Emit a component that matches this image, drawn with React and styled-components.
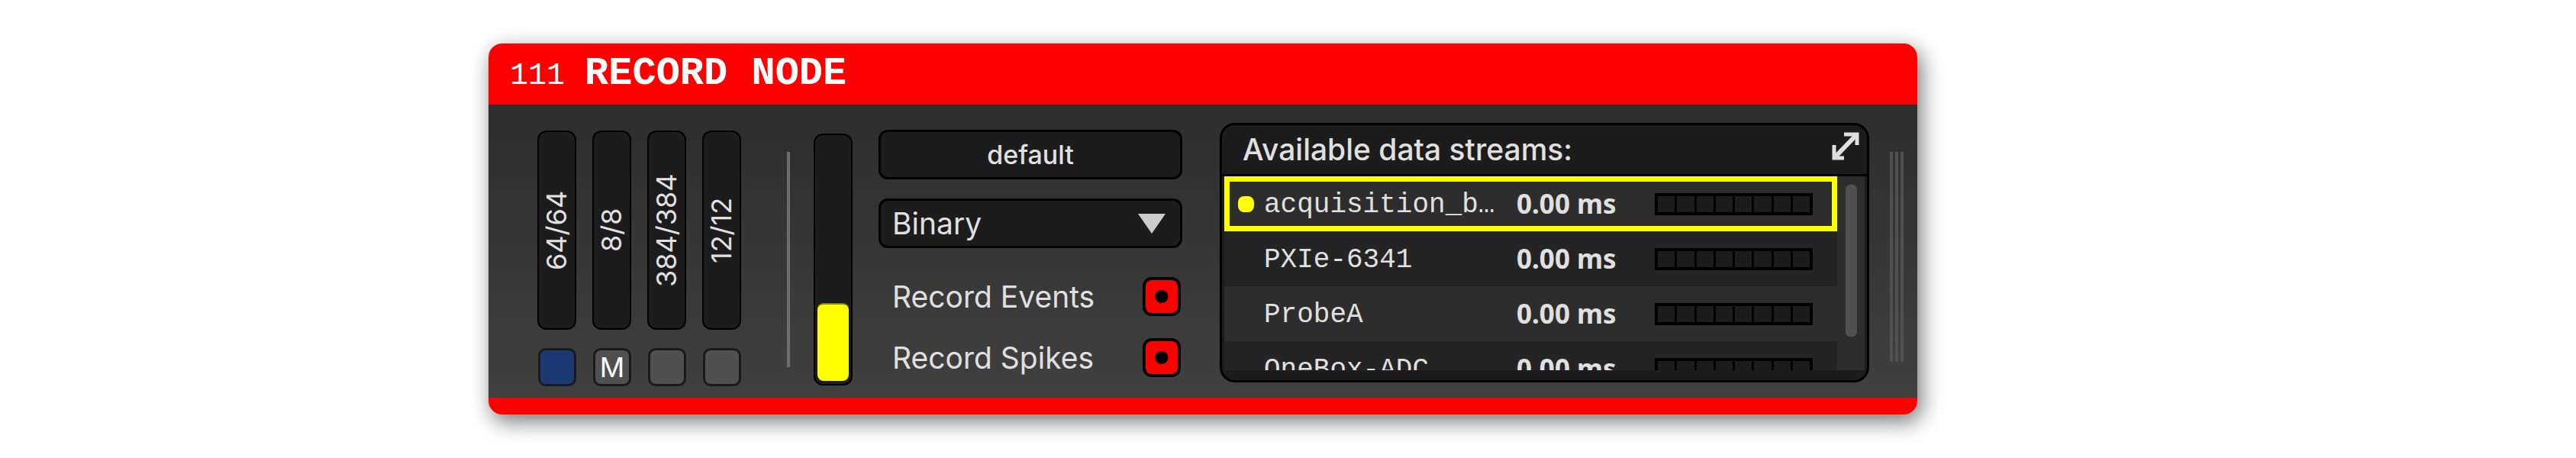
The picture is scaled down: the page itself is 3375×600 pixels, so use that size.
import React, { useState } from "react";
import styled, { createGlobalStyle } from "styled-components";

const GlobalStyle = createGlobalStyle`
  *, *::before, *::after { box-sizing: border-box; }
  body { margin: 0; background: #fff; }
  button, select, input { font: inherit; margin: 0; padding: 0; }
`;

const sans = `"Inter", "Liberation Sans", sans-serif`;
const mono = `"Liberation Mono", monospace`;

const Page = styled.main`
  display: grid;
  grid-template-columns: 640fr minmax(max-content, 1872fr) 863fr;
  padding: 57px 0;
  font-family: ${sans};
  color: #e0e0e0;
`;

const NodePanel = styled.section`
  grid-column: 2;
  border-radius: 18px;
  overflow: hidden;
  background: #f00;
  box-shadow: 5px 9px 28px rgba(0, 0, 0, 0.55);
`;

const TitleBar = styled.header`
  display: flex;
  align-items: baseline;
  gap: 26px;
  height: 80px;
  padding: 10px 28px 0;
  color: #fff;
  font-family: ${mono};
`;

const NodeId = styled.span`
  font-size: 40px;
  line-height: 60px;
`;

const NodeName = styled.h1`
  margin: 0;
  font-size: 52px;
  line-height: 60px;
  font-weight: 700;
`;

const Body = styled.div`
  display: flex;
  align-items: flex-start;
  margin-bottom: 22px;
  padding: 24px 18px 15px 64px;
  background: linear-gradient(#2d2d2d, #404040);
`;

const Gauges = styled.div`
  display: flex;
  gap: 21px;
  margin-top: 10px;
`;

const Gauge = styled.div`
  display: flex;
  flex-direction: column;
  align-items: flex-end;
  gap: 24px;
`;

const ChannelButton = styled.button`
  width: 51px;
  height: 261px;
  border: 2px solid #000;
  border-radius: 12px;
  background: #1c1c1c;
  color: #e0e0e0;
  font-size: 36px;
  line-height: 47px;
  writing-mode: vertical-rl;
  transform: rotate(180deg);
`;

const SyncButton = styled.button`
  width: 50px;
  height: 50px;
  border: 3px solid #1a1a1a;
  border-radius: 10px;
  background: ${(p) => (p.$synced ? "#1b3a73" : "#505050")};
  color: #fff;
  font-size: 36px;
  line-height: 44px;
`;

const Divider = styled.div`
  width: 4px;
  height: 282px;
  margin: 38px 31px 0 60px;
  background: #6e6e6e;
`;

const DiskMeter = styled.div`
  display: flex;
  align-items: flex-end;
  width: 51px;
  height: 330px;
  margin-top: 14px;
  padding: 0 3px 4px;
  border: 2px solid #000;
  border-radius: 12px;
  background: #1c1c1c;
`;

const DiskFill = styled.div`
  width: 100%;
  height: 102px;
  border-top: 2px solid #8a8a00;
  border-radius: 8px;
  background: #ff0;
`;

const Controls = styled.div`
  display: flex;
  flex-direction: column;
  width: 398px;
  margin: 9px 49px 0 34px;
`;

const DirectoryButton = styled.button`
  height: 65px;
  border: 3px solid #000;
  border-radius: 12px;
  background: #1c1c1c;
  color: #e0e0e0;
  font-size: 34px;
  font-weight: 500;
`;

const SelectBox = styled.div`
  display: grid;
  align-items: center;
  margin: 25px 0 38px;
`;

const EngineSelect = styled.select`
  grid-area: 1 / 1;
  appearance: none;
  width: 100%;
  height: 65px;
  padding: 0 60px 0 15px;
  border: 3px solid #000;
  border-radius: 12px;
  background: #1c1c1c;
  color: #e0e0e0;
  font-size: 39px;
`;

const Arrow = styled.svg`
  grid-area: 1 / 1;
  justify-self: end;
  width: 36px;
  height: 26px;
  margin-right: 22px;
  pointer-events: none;
`;

const RecordRow = styled.label`
  display: flex;
  align-items: center;
  justify-content: space-between;
  height: 51px;
  margin-bottom: 29px;
  padding: 0 2px 0 18px;
  font-size: 39px;

  &:last-child { margin-bottom: 0; }
`;

const RecordToggle = styled.input`
  appearance: none;
  width: 50px;
  height: 51px;
  border: 4px solid #000;
  border-radius: 12px;
  background: ${(p) =>
    p.checked ? "radial-gradient(circle, #000 8px, #f00 9px)" : "#505050"};
`;

const Streams = styled.section`
  flex: 1;
  min-width: 851px;
  padding-bottom: 13px;
  border: 3px solid #000;
  border-radius: 20px;
  background: #1c1c1c;
  overflow: hidden;
`;

const StreamsHeader = styled.div`
  display: flex;
  align-items: flex-start;
  justify-content: space-between;
  height: 67px;
  padding: 8px 10px 0 27px;
  border-bottom: 3px solid #000;
`;

const StreamsTitle = styled.h2`
  margin: 0;
  font-size: 39px;
  line-height: 48px;
  font-weight: 500;
`;

const ExpandButton = styled.button`
  display: flex;
  margin-top: 1px;
  border: 0;
  background: none;
  color: #e0e0e0;
`;

const StreamsList = styled.div`
  display: flex;
  align-items: flex-start;
  height: 254px;
  padding: 0 3px;
  overflow: hidden;
`;

const StreamTable = styled.table`
  flex: 1;
  table-layout: fixed;
  border-collapse: collapse;

  td { padding: 0; height: 72px; }
`;

const StreamRow = styled.tr`
  background: ${(p) => (p.$odd ? "#242424" : "#2d2d2d")};
  ${(p) => p.$selected && "outline: 7px solid #ff0; outline-offset: -7px;"}
`;

const StreamName = styled.div`
  display: flex;
  align-items: center;
  gap: 13px;
  width: 383px;
  padding-left: 18px;
  font-family: ${mono};
  font-size: 36px;
  line-height: 48px;
`;

const NameText = styled.span`
  padding-top: 3px;
`;

const Dot = styled.span`
  width: 21px;
  height: 21px;
  border-radius: 8px;
  background: ${(p) => (p.$on ? "#ff0" : "transparent")};
`;

const Delay = styled.div`
  width: 181px;
  font-family: "Noto Sans", sans-serif;
  font-size: 35px;
  line-height: 48px;
  font-weight: 700;
`;

const FifoMeter = styled.div`
  display: flex;
  gap: 3px;
  width: 207px;
  height: 29px;
  margin-right: 32px;
  padding: 4px;
  background: #000;
`;

const FifoCell = styled.span`
  flex: 1;
  background: #1c1c1c;
`;

const ScrollTrack = styled.div`
  width: 36px;
  height: 254px;
  padding: 11px 10px 0 11px;
  background: #2d2d2d;
`;

const ScrollThumb = styled.div`
  height: 199px;
  border-radius: 6px;
  background: #505050;
`;

const Grip = styled.div`
  display: flex;
  gap: 3px;
  height: 275px;
  margin: 38px 0 0 27px;
`;

const GripLine = styled.span`
  width: 4px;
  background: #505050;
`;

const gauges = [
  { channels: "64/64", synced: true },
  { channels: "8/8", mark: "M" },
  { channels: "384/384" },
  { channels: "12/12" },
];

const streams = ["acquisition_b…", "PXIe-6341", "ProbeA", "OneBox-ADC"];

export default function App() {
  const [events, setEvents] = useState(true);
  const [spikes, setSpikes] = useState(true);
  const [selected, setSelected] = useState(0);

  return (
    <>
      <GlobalStyle />
      <Page>
        <NodePanel>
          <TitleBar>
            <NodeId>111</NodeId>
            <NodeName>RECORD NODE</NodeName>
          </TitleBar>
          <Body>
            <Gauges>
              {gauges.map((g) => (
                <Gauge key={g.channels}>
                  <ChannelButton>{g.channels}</ChannelButton>
                  <SyncButton $synced={g.synced} aria-label="Sync line">
                    {g.mark}
                  </SyncButton>
                </Gauge>
              ))}
            </Gauges>
            <Divider />
            <DiskMeter>
              <DiskFill />
            </DiskMeter>
            <Controls>
              <DirectoryButton>default</DirectoryButton>
              <SelectBox>
                <EngineSelect aria-label="Engine">
                  <option>Binary</option>
                </EngineSelect>
                <Arrow viewBox="0 0 36 26" aria-hidden="true">
                  <path d="M0 0h36L18 26z" fill="#ccc" />
                </Arrow>
              </SelectBox>
              <RecordRow>
                Record Events
                <RecordToggle
                  type="checkbox"
                  checked={events}
                  onChange={(e) => setEvents(e.target.checked)}
                />
              </RecordRow>
              <RecordRow>
                Record Spikes
                <RecordToggle
                  type="checkbox"
                  checked={spikes}
                  onChange={(e) => setSpikes(e.target.checked)}
                />
              </RecordRow>
            </Controls>
            <Streams>
              <StreamsHeader>
                <StreamsTitle>Available data streams:</StreamsTitle>
                <ExpandButton aria-label="Expand">
                  <svg width="36" height="37" viewBox="0 0 36 37" fill="none" stroke="currentColor">
                    <path d="M16 3h17v14M3 17v17h13" strokeWidth="5" />
                    <path d="M4 33L32 4" strokeWidth="6" />
                  </svg>
                </ExpandButton>
              </StreamsHeader>
              <StreamsList>
                <StreamTable>
                  <tbody>
                    {streams.map((name, i) => (
                      <StreamRow
                        key={name}
                        $odd={i % 2 === 1}
                        $selected={i === selected}
                        onClick={() => setSelected(i)}
                      >
                        <td>
                          <StreamName>
                            <Dot $on={i === selected} />
                            <NameText>{name}</NameText>
                          </StreamName>
                        </td>
                        <td>
                          <Delay>0.00 ms</Delay>
                        </td>
                        <td>
                          <FifoMeter>
                            {Array.from({ length: 8 }, (_, c) => (
                              <FifoCell key={c} />
                            ))}
                          </FifoMeter>
                        </td>
                      </StreamRow>
                    ))}
                  </tbody>
                </StreamTable>
                <ScrollTrack>
                  <ScrollThumb />
                </ScrollTrack>
              </StreamsList>
            </Streams>
            <Grip>
              <GripLine />
              <GripLine />
              <GripLine />
            </Grip>
          </Body>
        </NodePanel>
      </Page>
    </>
  );
}
